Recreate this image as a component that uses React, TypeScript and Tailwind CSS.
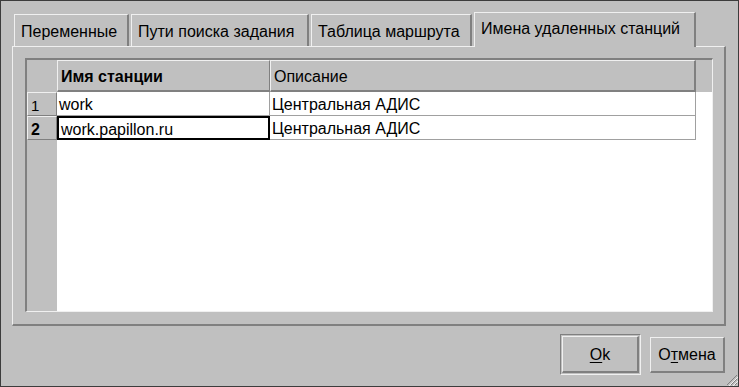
import type { ReactNode } from "react";

const tabs = [
  { label: "Переменные", width: "w-[115px]", active: false },
  { label: "Пути поиска задания", width: "w-[178px]", active: false },
  { label: "Таблица маршрута", width: "w-[161px]", active: false },
  { label: "Имена удаленных станций", width: "w-[222px]", active: true }
];

const rows = [
  { id: 1, name: "work", description: "Центральная АДИС" },
  { id: 2, name: "work.papillon.ru", description: "Центральная АДИС" }
];

function Tab({ label, width, active }: { label: string; width: string; active: boolean }) {
  return (
    <div
      className={`${width} flex items-center whitespace-nowrap border-t border-l border-r-2 border-t-[#f0f0f0] border-l-[#f0f0f0] border-r-[#808080] bg-[#c0c0c0] px-[6px] ${
        active ? "relative z-10 -mb-px h-[35px] pb-[2px]" : "h-[32px] pt-[2px]"
      }`}
    >
      {label}
    </div>
  );
}

function RowHeader({ children, bold }: { children?: ReactNode; bold?: boolean }) {
  return (
    <div
      className={`flex h-full w-[30px] shrink-0 items-center border-t border-l border-r border-b border-t-[#f0f0f0] border-l-[#f0f0f0] border-r-[#808080] border-b-[#808080] pl-[3px] pt-[3px] ${
        bold ? "text-[16px] font-bold" : "text-[15px]"
      }`}
    >
      {children}
    </div>
  );
}

export default function App() {
  return (
    <div
      className="relative box-border h-[387px] w-[739px] overflow-hidden border border-[#3c3c3c] bg-[#c0c0c0] pl-[11px] pt-[11px] text-[16px] leading-none text-black"
      style={{ fontFamily: '"Liberation Sans", Arial, sans-serif' }}
    >
      {/* tab bar */}
      <div className="flex h-[34px] items-end gap-[2px] pl-[2px]">
        {tabs.map((tab) => (
          <Tab key={tab.label} {...tab} />
        ))}
      </div>

      {/* tab page */}
      <div className="box-border h-[280px] w-[714px] border-t border-l border-r-2 border-b-2 border-t-[#f0f0f0] border-l-[#f0f0f0] border-r-[#808080] border-b-[#808080] pl-[12px] pt-[11px]">
        <div className="box-border flex h-[254px] w-[688px] flex-col border-t-2 border-l-2 border-r border-b border-t-[#808080] border-l-[#808080] border-r-[#f0f0f0] border-b-[#f0f0f0]">
          {/* header row */}
          <div className="flex h-[32px] shrink-0">
            <div className="w-[30px] shrink-0" />
            <div className="flex w-[213px] shrink-0 items-center whitespace-nowrap border-t border-l border-r border-b-2 border-t-[#f0f0f0] border-l-[#f0f0f0] border-r-[#808080] border-b-[#808080] pl-[3px] pt-[3px] font-bold">
              Имя станции
            </div>
            <div className="flex w-[426px] shrink-0 items-center border-t border-l border-r-2 border-b-2 border-t-[#f0f0f0] border-l-[#f0f0f0] border-r-[#808080] border-b-[#808080] pl-[3px] pt-[3px]">
              Описание
            </div>
            <div className="flex-1" />
          </div>

          {/* data rows */}
          {rows.map((row) => (
            <div key={row.id} className="flex h-[24px] shrink-0">
              <RowHeader bold={row.id === 2}>{row.id}</RowHeader>
              <div
                className={`flex w-[213px] shrink-0 items-center whitespace-nowrap bg-white pl-[2px] pt-[3px] ${
                  row.id === 2
                    ? "border-2 border-black"
                    : "border-r border-b border-[#a0a0a0]"
                }`}
              >
                {row.name}
              </div>
              <div className="flex w-[426px] shrink-0 items-center border-r border-b border-[#a0a0a0] bg-white pl-[2px] pt-[3px]">
                {row.description}
              </div>
              <div className="flex-1 bg-white" />
            </div>
          ))}

          {/* empty area */}
          <div className="flex flex-1">
            <div className="w-[30px] shrink-0" />
            <div className="flex-1 bg-white" />
          </div>
        </div>
      </div>

      {/* buttons */}
      <div className="mt-[8px] flex w-[714px] items-center justify-end gap-[9px] pr-[1px]">
        <div className="box-border h-[41px] w-[81px] border-t border-l border-r border-b border-t-[#808080] border-l-[#808080] border-r-[#f0f0f0] border-b-[#f0f0f0] p-px">
          <button
            type="button"
            className="box-border flex h-full w-full items-center justify-center border-t border-l border-r-2 border-b-2 border-t-[#f0f0f0] border-l-[#f0f0f0] border-r-[#808080] border-b-[#808080] bg-[#c0c0c0] pt-[2px]"
          >
            <span className="underline decoration-1 underline-offset-2">O</span>k
          </button>
        </div>
        <button
          type="button"
          className="box-border flex h-[36px] w-[75px] items-center justify-center border-t border-l border-r-2 border-b-2 border-t-[#f0f0f0] border-l-[#f0f0f0] border-r-[#808080] border-b-[#808080] bg-[#c0c0c0] pt-[2px]"
        >
          О<span className="underline decoration-1 underline-offset-2">т</span>мена
        </button>
      </div>

      {/* size grip */}
      <svg className="absolute right-0 bottom-0" width="13" height="13" viewBox="0 0 13 13">
        <line x1="12" y1="2" x2="2" y2="12" stroke="#808080" strokeWidth="1" />
        <line x1="13" y1="4" x2="4" y2="13" stroke="#f0f0f0" strokeWidth="1" />
        <line x1="12" y1="6" x2="6" y2="12" stroke="#808080" strokeWidth="1" />
        <line x1="13" y1="8" x2="8" y2="13" stroke="#f0f0f0" strokeWidth="1" />
        <line x1="12" y1="10" x2="10" y2="12" stroke="#808080" strokeWidth="1" />
      </svg>
    </div>
  );
}
